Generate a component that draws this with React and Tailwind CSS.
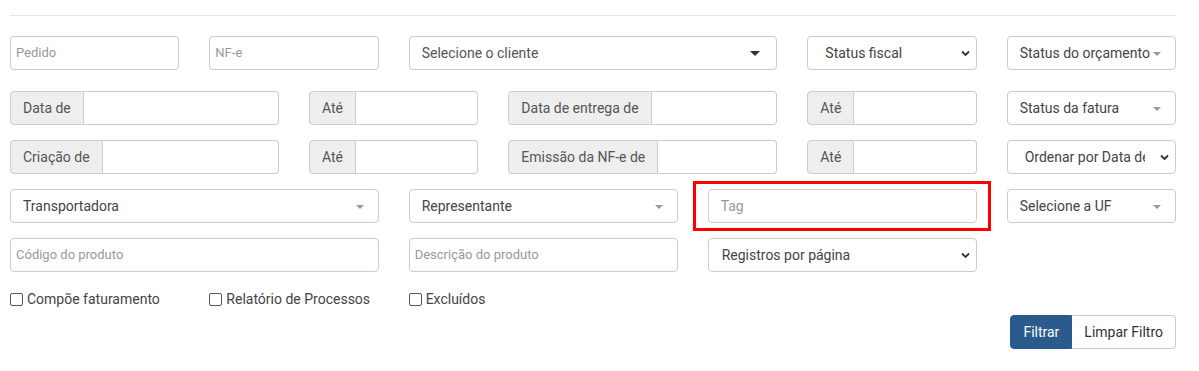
import React from 'react';

const box = 'h-[34px] w-full rounded-[4px] border border-[#ccc] bg-white';

const TextInput = ({ placeholder, className = 'pl-[5px] text-[13px]' }) => (
  <div className={`${box} flex items-center ${className} text-[#999]`}>{placeholder}</div>
);

const DateGroup = ({ label }) => (
  <div className="flex h-[34px] w-full">
    <div className="flex items-center whitespace-nowrap rounded-l-[4px] border border-[#ccc] bg-[#eee] px-[12px] text-[14px] text-[#555]">
      {label}
    </div>
    <div className="flex-1 rounded-r-[4px] border border-l-0 border-[#ccc] bg-white" />
  </div>
);

// select2 style: dark solid triangle
const ClientSelect = ({ label }) => (
  <div className={`${box} relative flex items-center pl-[12px] text-[14px] text-[#555]`}>
    {label}
    <span className="absolute right-[16px] top-[14px] h-0 w-0 border-x-[5px] border-t-[5px] border-x-transparent border-t-[#333]" />
  </div>
);

// bootstrap-select style: small grey caret
const PickerSelect = ({ label }) => (
  <div className={`${box} relative flex items-center pl-[12px] text-[14px] text-[#444]`}>
    <span className="truncate pr-[20px]">{label}</span>
    <span className="absolute right-[14px] top-[15px] h-0 w-0 border-x-[4px] border-t-[4px] border-x-transparent border-t-[#999]" />
  </div>
);

// native select with chevron
const NativeSelect = ({ label, pad = 'pl-[16px]' }) => (
  <div className={`${box} relative flex items-center ${pad} text-[14px] text-[#444]`}>
    <span className="mr-[30px] overflow-hidden whitespace-nowrap">{label}</span>
    <svg className="absolute right-[6px] top-[13px]" width="9" height="7" viewBox="0 0 9 7">
      <path d="M1 1.5 L4.5 5 L8 1.5" fill="none" stroke="#333" strokeWidth="1.8" />
    </svg>
  </div>
);

const Check = ({ label }) => (
  <label className="flex items-center gap-[4px] text-[14px] text-[#444]">
    <span className="h-[13px] w-[13px] rounded-[2px] border border-[#555] bg-white" />
    {label}
  </label>
);

export default function App() {
  return (
    <div className="min-h-[371px] bg-white font-['Roboto','Liberation_Sans',sans-serif]">
      <div className="ml-[10px] w-[1166px] pt-[15px]">
        <div className="border-t border-[#e5e5e5]" />

        <div className="mt-[20px] grid grid-cols-12 gap-x-[30px]">
          <div className="col-span-2"><TextInput placeholder="Pedido" /></div>
          <div className="col-span-2"><TextInput placeholder="NF-e" /></div>
          <div className="col-span-4"><ClientSelect label="Selecione o cliente" /></div>
          <div className="col-span-2"><NativeSelect label="Status fiscal" pad="pl-[17px]" /></div>
          <div className="col-span-2"><PickerSelect label="Status do orçamento" /></div>
        </div>

        <div className="mt-[21px] grid grid-cols-12 gap-x-[30px]">
          <div className="col-span-3"><DateGroup label="Data de" /></div>
          <div className="col-span-2"><DateGroup label="Até" /></div>
          <div className="col-span-3"><DateGroup label="Data de entrega de" /></div>
          <div className="col-span-2"><DateGroup label="Até" /></div>
          <div className="col-span-2"><PickerSelect label="Status da fatura" /></div>
        </div>

        <div className="mt-[15px] grid grid-cols-12 gap-x-[30px]">
          <div className="col-span-3"><DateGroup label="Criação de" /></div>
          <div className="col-span-2"><DateGroup label="Até" /></div>
          <div className="col-span-3"><DateGroup label="Emissão da NF-e de" /></div>
          <div className="col-span-2"><DateGroup label="Até" /></div>
          <div className="col-span-2"><NativeSelect label="Ordenar por Data de" pad="pl-[17px]" /></div>
        </div>

        <div className="mt-[15px] grid grid-cols-12 gap-x-[30px]">
          <div className="col-span-4"><PickerSelect label="Transportadora" /></div>
          <div className="col-span-3"><PickerSelect label="Representante" /></div>
          <div className="relative col-span-3">
            <TextInput placeholder="Tag" className="pl-[12px] text-[14px]" />
            <div className="pointer-events-none absolute -bottom-[8px] -left-[15px] -right-[14px] -top-[8px] border-[3px] border-[#f00]" />
          </div>
          <div className="col-span-2"><PickerSelect label="Selecione a UF" /></div>
        </div>

        <div className="mt-[15px] grid grid-cols-12 gap-x-[30px]">
          <div className="col-span-4"><TextInput placeholder="Código do produto" /></div>
          <div className="col-span-3"><TextInput placeholder="Descrição do produto" /></div>
          <div className="col-span-3"><NativeSelect label="Registros por página" pad="pl-[13px]" /></div>
        </div>

        <div className="mt-[17px] grid h-[20px] grid-cols-12 gap-x-[30px]">
          <div className="col-span-2"><Check label="Compõe faturamento" /></div>
          <div className="col-span-2"><Check label="Relatório de Processos" /></div>
          <div className="col-span-2"><Check label="Excluídos" /></div>
        </div>

        <div className="mt-[6px] flex justify-end">
          <button className="h-[34px] rounded-l-[4px] border border-[#2a5a8c] bg-[#2b5a8c] px-[12px] text-[14px] text-white">
            Filtrar
          </button>
          <button className="h-[34px] rounded-r-[4px] border border-l-0 border-[#ccc] bg-white px-[12px] text-[14px] text-[#333]">
            Limpar Filtro
          </button>
        </div>
      </div>
    </div>
  );
}
